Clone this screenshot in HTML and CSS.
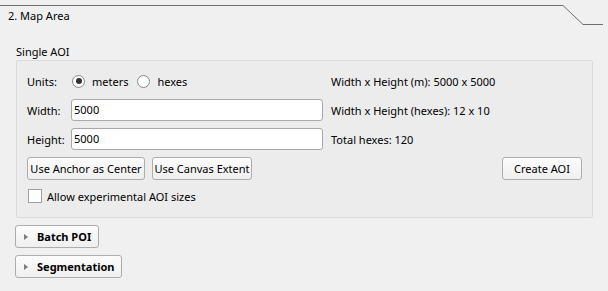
FILE: index.html
```html
<!DOCTYPE html>
<html lang="en">
<head>
    <meta charset="UTF-8">
    <title>Map Area</title>
    <link rel="stylesheet" href="styles.css">
</head>
<body>
    <div class="section-head">
        <svg class="tab-line" width="608" height="30" viewBox="0 0 608 30">
            <path d="M0 5.5 H563 L583 24.5 H603" fill="none" stroke="#6e6e6e" stroke-width="1"/>
        </svg>
        <div class="section-title">2. Map Area</div>
    </div>

    <div class="group-title">Single AOI</div>
    <div class="group">
        <div class="form-grid">
            <div class="label">Units:</div>
            <div class="radios">
                <span class="radio checked"></span><span class="radio-text">meters</span>
                <span class="radio"></span><span class="radio-text">hexes</span>
            </div>
            <div class="info">Width x Height (m): 5000 x 5000</div>

            <div class="label">Width:</div>
            <div class="input">5000</div>
            <div class="info">Width x Height (hexes): 12 x 10</div>

            <div class="label">Height:</div>
            <div class="input">5000</div>
            <div class="info">Total hexes: 120</div>
        </div>

        <div class="button-row">
            <button class="btn anchor">Use Anchor as Center</button>
            <button class="btn canvas">Use Canvas Extent</button>
            <button class="btn create">Create AOI</button>
        </div>

        <div class="check-row">
            <span class="checkbox"></span>
            <span>Allow experimental AOI sizes</span>
        </div>
    </div>

    <button class="btn toggle batch"><span class="arrow"></span>Batch POI</button>
    <button class="btn toggle seg"><span class="arrow"></span>Segmentation</button>
</body>
</html>
```

FILE: styles.css
```css
* {
    margin: 0;
    padding: 0;
    box-sizing: border-box;
}

body {
    font-family: 'Noto Sans', sans-serif;
    font-size: 11px;
    color: #000;
    background: #f0f0f0;
    width: 608px;
    height: 291px;
    overflow: hidden;
    white-space: nowrap;
}

/* Section header with tab notch */
.section-head {
    position: relative;
    height: 23px;
}

.tab-line {
    position: absolute;
    top: 0;
    left: 0;
}

.section-title {
    padding: 9px 0 0 8px;
    line-height: 14px;
}

.group-title {
    margin: 22px 0 0 16px;
    line-height: 14px;
}

/* Group box */
.group {
    margin: 1px 0 0 16px;
    width: 577px;
    height: 158px;
    border: 1px solid #dadada;
    border-radius: 2px;
    background: #ececec;
    padding: 9px 10px 0 10px;
}

.form-grid {
    display: grid;
    grid-template-columns: 44px 252px 1fr;
    grid-auto-rows: 22px;
    row-gap: 7px;
    align-items: center;
}

.info {
    padding-left: 8px;
}

.radios {
    display: flex;
    align-items: center;
}

.radio {
    width: 13px;
    height: 13px;
    border: 1px solid #8a8a8a;
    border-radius: 50%;
    background: #fff;
    margin-left: 1px;
    display: flex;
    align-items: center;
    justify-content: center;
}

.radio.checked::after {
    content: '';
    width: 6px;
    height: 6px;
    border-radius: 50%;
    background: #333;
}

.radio-text {
    margin: 0 8px 0 7px;
}

.input {
    height: 22px;
    border: 1px solid #a9a9a9;
    border-radius: 3px;
    background: #fff;
    padding-left: 2px;
    line-height: 20px;
}

.button-row {
    display: flex;
    gap: 7px;
    margin-top: 7px;
}

.btn {
    font: inherit;
    color: #000;
    height: 23px;
    border: 1px solid #adadad;
    border-radius: 3px;
    background: linear-gradient(#fcfcfc, #efefef);
    padding: 0;
    white-space: nowrap;
}

.anchor { width: 118px; }
.canvas { width: 100px; }
.create { width: 80px; margin-left: auto; }

.check-row {
    display: flex;
    align-items: center;
    gap: 5px;
    margin-top: 9px;
    height: 14px;
}

.checkbox {
    width: 14px;
    height: 14px;
    border: 1px solid #a0a0a0;
    background: #fff;
    margin-left: 1px;
}

/* Collapsible toggles */
.toggle {
    display: flex;
    align-items: center;
    margin: 7px 0 0 15px;
    height: 23px;
    font-weight: bold;
    padding: 0 0 0 8px;
}

.batch { width: 84px; }
.seg { width: 107px; }

.arrow {
    width: 0;
    height: 0;
    border-top: 3px solid transparent;
    border-bottom: 3px solid transparent;
    border-left: 4px solid #7a7a7a;
    margin-right: 9px;
}
```
